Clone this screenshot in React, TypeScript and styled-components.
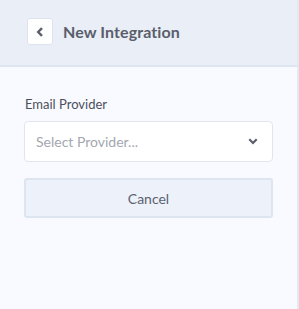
import React from "react";
import styled, { createGlobalStyle } from "styled-components";

const Global = createGlobalStyle`
  html, body { margin: 0; padding: 0; background: #f8faff; }
  body { font-family: Lato, "Open Sans", sans-serif; }
`;

const Page = styled.div`
  width: 297px;
  height: 309px;
  border-right: 2px solid #e3e9f3;
  background: #f8faff;
  display: flex;
  flex-direction: column;
`;

const Header = styled.header`
  height: 67px;
  box-sizing: border-box;
  background: #e9eef7;
  border-bottom: 2px solid #dde5f0;
  display: flex;
  align-items: center;
  gap: 10px;
  padding: 0 0 2px 27px;
`;

const BackButton = styled.button`
  width: 26px;
  height: 27px;
  box-sizing: border-box;
  border: 1px solid #dde4ef;
  border-radius: 3px;
  background: #ffffff;
  display: flex;
  align-items: center;
  justify-content: center;
  padding: 0;
  color: #5b5f6c;
`;

const Title = styled.h1`
  margin: 0;
  font-size: 16px;
  font-weight: 700;
  color: #5a5e6b;
  letter-spacing: 0.1px;
`;

const Body = styled.main`
  padding: 29px 24px 0 24px;
  display: flex;
  flex-direction: column;
`;

const Label = styled.label`
  font-size: 13px;
  color: #4b505c;
  margin-left: 1px;
  margin-bottom: 9px;
  line-height: 16px;
`;

const Select = styled.div`
  height: 41px;
  box-sizing: border-box;
  border: 1px solid #e1e6ee;
  border-radius: 4px;
  background: #ffffff;
  display: flex;
  align-items: center;
  justify-content: space-between;
  padding: 0 14px 0 11px;
  font-size: 14px;
  color: #a3a7b0;
`;

const CancelButton = styled.button`
  margin-top: 16px;
  height: 40px;
  box-sizing: border-box;
  border: 2px solid #dde5f1;
  border-radius: 3px;
  background: #edf1f9;
  font-family: Lato, "Open Sans", sans-serif;
  font-size: 14px;
  color: #5b6170;
`;

export default function App() {
  return (
    <>
      <Global />
      <Page>
        <Header>
          <BackButton aria-label="Back">
            <svg width="8" height="10" viewBox="0 0 8 10">
              <path d="M6 1.2 L2.2 5 L6 8.8" fill="none" stroke="#5b5f6c" strokeWidth="2.4" />
            </svg>
          </BackButton>
          <Title>New Integration</Title>
        </Header>
        <Body>
          <Label>Email Provider</Label>
          <Select>
            <span>Select Provider...</span>
            <svg width="10" height="7" viewBox="0 0 10 7">
              <path d="M1.3 1.3 L5 5 L8.7 1.3" fill="none" stroke="#5b5f6c" strokeWidth="2.2" />
            </svg>
          </Select>
          <CancelButton>Cancel</CancelButton>
        </Body>
      </Page>
    </>
  );
}
